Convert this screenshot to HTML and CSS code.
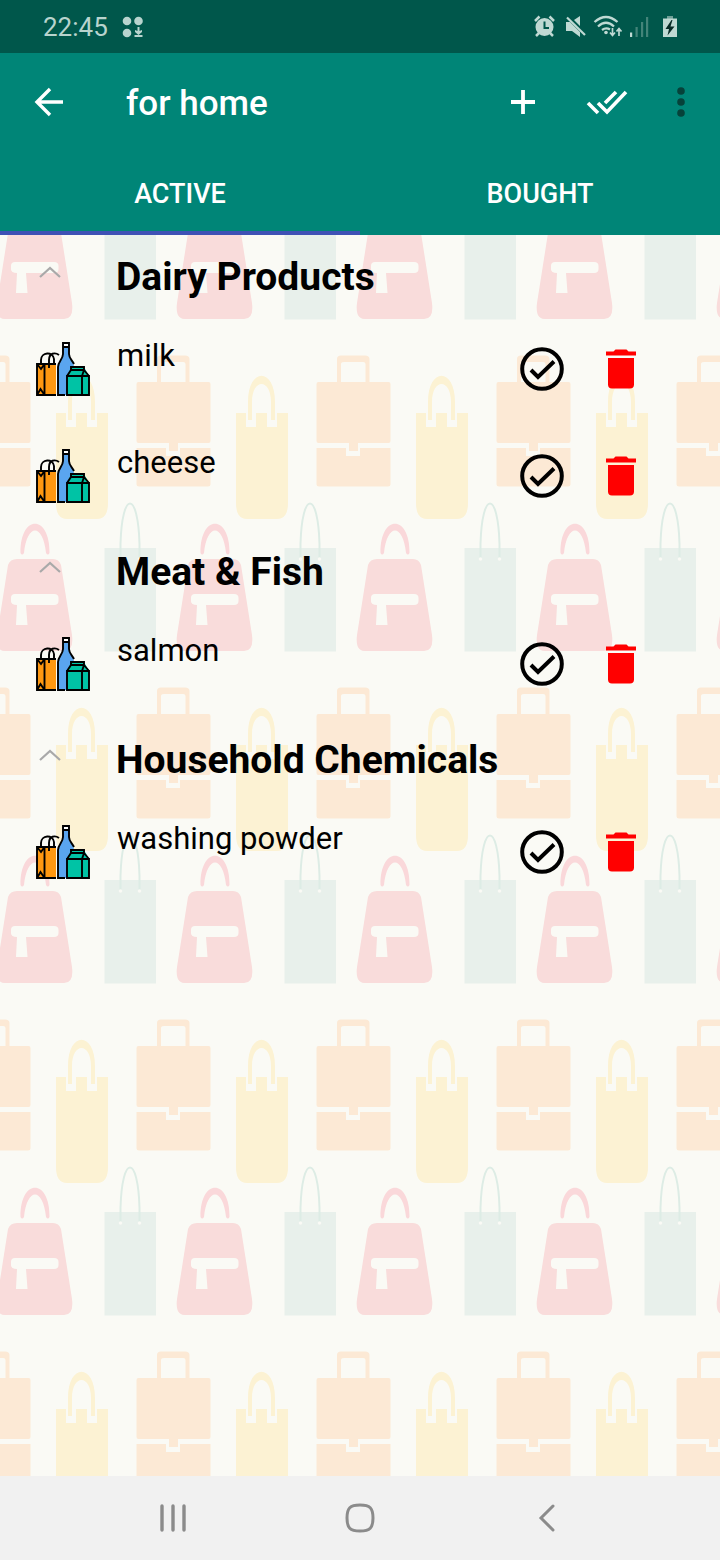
FILE: index.html
```
<!DOCTYPE html>
<html lang="en">
<head>
<meta charset="utf-8">
<meta name="viewport" content="width=device-width, initial-scale=1">
<title>for home</title>
<link rel="stylesheet" href="styles.css">
</head>
<body>
<svg class="defs" aria-hidden="true">
  <defs>
    <symbol id="goods" viewBox="0 0 54 54">
      <path d="M1 22H20V53H1Z" fill="#ff9811"/>
      <path d="M27 1h6v12c0 4 5 7 5 12v28H22V25c0-5 5-8 5-12Z" fill="#5aa5ef"/>
      <path d="M28 2h4v3h-4Z" fill="#fff"/>
      <path d="M31 34l4-9h13l5 9v19H31Z" fill="#00c3a5"/>
      <g fill="none" stroke="#000" stroke-width="1.900">
        <path d="M20 22H1V53H20M8.500 22V53M1 22l4 5 3.500-5M1 53l3.500-6 4 6M5 22V18C5 10 17 9 18 17V22M13 26V18C13 11 19 10 23 13"/>
        <path d="M29 53H22V25C22 20 27 17 27 12V1H33V12C33 16 36 18 38 22M27 5H33"/>
        <path d="M31 34H53V53H31ZM31 34L35 28V25H48V28L53 34M35 28H48M46 34V53M48 28L46 34"/>
      </g>
    </symbol>
    <symbol id="check" viewBox="0 0 44 44">
      <circle cx="22" cy="22" r="19.800" fill="none" stroke="#000" stroke-width="4"/>
      <path d="M11 23L18 30L34 14.500" fill="none" stroke="#000" stroke-width="4"/>
    </symbol>
    <symbol id="trash" viewBox="0 0 32 40">
      <path d="M1 2.500H8.500L10.500.5H21.500L23.500 2.500H31V6.500H1ZM3 9H29V35.500Q29 39.500 25 39.500H7Q3 39.500 3 35.500Z" fill="#f00"/>
    </symbol>
    <symbol id="chevron" viewBox="0 0 24 24">
      <path d="M2 17L12 8L22 17" fill="none" stroke="#a9a9a9" stroke-width="2.200"/>
    </symbol>
    <g id="bags">
      <g fill="#fce9d5">
        <rect x="136.500" y="46" width="74" height="61" rx="2"/>
        <path d="M136.500 112H166V120H180V112H210.500V148Q210.500 150.500 208 150.500H139Q136.500 150.500 136.500 148Z"/>
        <path d="M169 105H178V115H169Z"/>
        <path d="M157 47V23Q157 19.500 161 19.500H185Q189.500 19.500 189.500 23V47H185.500V28Q185.500 26 183 26H164Q161 26 161 28V47Z"/>
      </g>
      <path d="M56 77H66V91H76V77H87V91H97V77H108V167Q108 183 97 183H67Q56 183 56 167Z" fill="#fcf2d3"/>
      <path d="M68 84V66C68 31 95 31 95 66V84L91 84V66C91 42 72 42 72 66V84Z" fill="#fcf2d3"/>
      <path d="M17 223H53Q59 223 61 229L72 299Q74 315 64 315H5Q-5 315 -3 299L8 229Q10 223 17 223ZM15 258Q11 258 11 262V265Q11 269 17 269L16 289H27.500L26 269H54Q58.500 269 58.500 265V262Q58.500 258 54 258Z" fill="#f9dcdb" fill-rule="evenodd"/>
      <path d="M20.500 217C20 178 50 178 49.500 217Q48 220 46 217C43 187 27 187 24 217Q22 220 20.500 217Z" fill="#fad8da"/>
      <path d="M104.500 212H156V315.500H104.500Z" fill="#e8f0eb"/>
      <path d="M120.500 222V208C122 154 138 154 139.500 208V222" fill="none" stroke="#ddece5" stroke-width="2"/>
      <circle cx="120.500" cy="223" r="1.800" fill="#fafaf5"/>
      <circle cx="139.500" cy="223" r="1.800" fill="#fafaf5"/>
    </g>
    <pattern id="wallpaper" x="0" y="101" width="180" height="332" patternUnits="userSpaceOnUse">
      <use href="#bags"/>
      <use href="#bags" x="-180"/>
      <use href="#bags" x="180"/>
    </pattern>
  </defs>
</svg>

<div class="screen">
  <div class="status">
    <span class="clock">22:45</span>
    <svg width="22" height="22" viewBox="0 0 22 22" fill="#b8d4ce"><circle cx="5" cy="5" r="4.300"/><circle cx="16.500" cy="5" r="4.300"/><circle cx="5" cy="17" r="4.300"/><path d="M15.500 11h2v4l2.500-1v2l-3.500 3-3.500-3v-2l2.500 1ZM12.500 19h8v2h-8Z"/></svg>
    <svg class="status-icons" width="146" height="24" viewBox="533 15 146 24" fill="#bfd9d3">
      <circle cx="544.500" cy="27" r="9"/>
      <path d="M535 21l4.500-4.500M554 21l-4.500-4.500M539 33l-3 3M550 33l3 3" stroke="#bfd9d3" stroke-width="2.500"/>
      <path d="M544.500 21.500V28H549" fill="none" stroke="#00574b" stroke-width="2"/>
      <path d="M566 22H570L580 32V37L572 31H566ZM574 20L580 16V26Z"/>
      <path d="M567 17.500L585 35" stroke="#bfd9d3" stroke-width="2.200"/>
      <g fill="none" stroke="#bfd9d3" stroke-width="2.300"><path d="M594.500 22Q606 12 617.500 22M598 26.500Q606 19 614 26.500M602 30Q606 27 610 29.500"/></g>
      <circle cx="606" cy="32.500" r="1.800"/>
      <path d="M612.500 28V35M610 32.500L612.500 35.500L615 32.500M619 36V29M616.500 31.500L619 28.500L621.500 31.500" fill="none" stroke="#bfd9d3" stroke-width="1.700"/>
      <path d="M630 32.500h2.200V37h-2.200Z"/>
      <path d="M635.500 27h2.200V37h-2.200ZM641 22h2.200V37h-2.200ZM646 17h2.200V37h-2.200Z" fill="#438479"/>
      <path d="M667 16h6v3h-6Z" fill="#6f9f97"/><path d="M663 18.500h14V37h-14Z"/>
      <path d="M671.500 20L665.500 29H669L667.500 35.500L674.500 26.500H670.500L672.500 20Z" fill="#082b26"/>
    </svg>
  </div>

  <header class="appbar">
    <button class="icon-button back" aria-label="Back"><svg width="30" height="30" viewBox="0 0 30 30"><path d="M29 15H4M16 2L3 15L16 28" fill="none" stroke="#fff" stroke-width="3.400"/></svg></button>
    <h1 class="title">for home</h1>
    <button class="icon-button" aria-label="Add"><svg width="26" height="26" viewBox="0 0 26 26"><path d="M13 1V25M1 13H25" stroke="#fff" stroke-width="3.800"/></svg></button>
    <button class="icon-button all" aria-label="Mark all bought"><svg width="42" height="26" viewBox="0 0 42 26"><path d="M2 14L12 24M12 14L21 23L40 3M19 14L30 3" fill="none" stroke="#fff" stroke-width="3.600"/></svg></button>
    <button class="icon-button more" aria-label="More options"><svg width="8" height="30" viewBox="0 0 8 30" fill="#06423a"><circle cx="4" cy="4" r="3.800"/><circle cx="4" cy="15" r="3.800"/><circle cx="4" cy="26" r="3.800"/></svg></button>
  </header>

  <nav class="tabs">
    <button class="tab active">ACTIVE</button>
    <button class="tab">BOUGHT</button>
  </nav>

  <main class="content">
    <svg class="wallpaper" aria-hidden="true"><rect width="100%" height="100%" fill="#fafaf5"/><rect width="100%" height="100%" fill="url(#wallpaper)"/></svg>
    <section>
      <div class="group"><button class="toggle" aria-label="Collapse Dairy Products"><svg width="24" height="24"><use href="#chevron"/></svg></button><h2 class="group-name">Dairy Products</h2></div>
      <ul class="items">
        <li class="item"><svg class="goods"><use href="#goods"/></svg><span class="name">milk</span><button class="action" aria-label="Mark milk bought"><svg width="44" height="44"><use href="#check"/></svg></button><button class="action" aria-label="Delete milk"><svg width="32" height="40"><use href="#trash"/></svg></button></li>
        <li class="item"><svg class="goods"><use href="#goods"/></svg><span class="name">cheese</span><button class="action" aria-label="Mark cheese bought"><svg width="44" height="44"><use href="#check"/></svg></button><button class="action" aria-label="Delete cheese"><svg width="32" height="40"><use href="#trash"/></svg></button></li>
      </ul>
    </section>
    <section>
      <div class="group"><button class="toggle" aria-label="Collapse Meat &amp; Fish"><svg width="24" height="24"><use href="#chevron"/></svg></button><h2 class="group-name">Meat &amp; Fish</h2></div>
      <ul class="items">
        <li class="item"><svg class="goods"><use href="#goods"/></svg><span class="name">salmon</span><button class="action" aria-label="Mark salmon bought"><svg width="44" height="44"><use href="#check"/></svg></button><button class="action" aria-label="Delete salmon"><svg width="32" height="40"><use href="#trash"/></svg></button></li>
      </ul>
    </section>
    <section>
      <div class="group"><button class="toggle" aria-label="Collapse Household Chemicals"><svg width="24" height="24"><use href="#chevron"/></svg></button><h2 class="group-name">Household Chemicals</h2></div>
      <ul class="items">
        <li class="item"><svg class="goods"><use href="#goods"/></svg><span class="name">washing powder</span><button class="action" aria-label="Mark washing powder bought"><svg width="44" height="44"><use href="#check"/></svg></button><button class="action" aria-label="Delete washing powder"><svg width="32" height="40"><use href="#trash"/></svg></button></li>
      </ul>
    </section>
  </main>

  <footer class="navbar">
    <button class="nav-button" aria-label="Recent apps"><svg width="30" height="30" viewBox="0 0 30 30"><path d="M4 3V27M15 3V27M26 3V27" stroke="#8b8b8b" stroke-width="3.400" stroke-linecap="round"/></svg></button>
    <button class="nav-button" aria-label="Home"><svg width="30" height="30" viewBox="0 0 30 30"><path d="M15 2C25 2 28 5 28 15S25 28 15 28S2 25 2 15S5 2 15 2Z" fill="none" stroke="#8b8b8b" stroke-width="3"/></svg></button>
    <button class="nav-button" aria-label="Back"><svg width="30" height="30" viewBox="0 0 30 30"><path d="M21 3L9 15L21 27" fill="none" stroke="#8b8b8b" stroke-width="3" stroke-linecap="round"/></svg></button>
  </footer>
</div>
</body>
</html>
```
FILE: styles.css
```
* {
  box-sizing: border-box;
}

body {
  margin: 0;
  font-family: Roboto, "Liberation Sans", sans-serif;
  color: #000;
}

button {
  padding: 0;
  border: 0;
  background: none;
  font: inherit;
  color: inherit;
}

svg {
  display: block;
  flex: none;
}

.defs {
  position: absolute;
  width: 0;
  height: 0;
}

.screen {
  display: flex;
  flex-direction: column;
  min-height: 100vh;
}

.status {
  display: flex;
  align-items: center;
  gap: 14px;
  height: 53px;
  padding: 0 41px 0 43px;
  background: #00574b;
  color: #b8d4ce;
}

.clock {
  font-size: 26px;
  line-height: 32px;
}

.status-icons {
  margin-left: auto;
}

.appbar {
  display: flex;
  align-items: center;
  height: 99px;
  padding: 0 21px 2px;
  background: #008577;
  color: #fff;
}

.icon-button {
  display: flex;
  align-items: center;
  justify-content: center;
  width: 56px;
  height: 56px;
}

.all {
  width: 112px;
}

.more {
  width: 36px;
}

.title {
  flex: 1;
  margin: 0;
  padding: 4px 0 0 49px;
  font-size: 35px;
  font-weight: 500;
  line-height: 40px;
}

.tabs {
  display: flex;
  height: 83px;
  background: #008577;
  color: #fff;
}

.tab {
  flex: 1;
  border-top: 4px solid transparent;
  border-bottom: 4px solid transparent;
  font-size: 27px;
  font-weight: 500;
}

.tab.active {
  border-bottom-color: #3f51b5;
}

.content {
  position: relative;
  flex: 1;
}

.wallpaper {
  position: absolute;
  inset: 0;
  z-index: -1;
  width: 100%;
  height: 100%;
}

.group {
  display: flex;
  align-items: center;
  height: 81px;
  padding: 2px 0 0 38px;
}

.toggle {
  width: 24px;
  height: 34px;
  padding-bottom: 10px;
}

.group-name {
  margin: 0;
  padding-left: 54px;
  font-size: 39px;
  font-weight: 700;
  line-height: 48px;
}

.items {
  margin: 0;
  padding: 0;
  list-style: none;
}

.item {
  display: flex;
  align-items: center;
  height: 107px;
  padding: 0 83px 2px 36px;
}

.goods {
  width: 54px;
  height: 54px;
}

.name {
  flex: 1;
  padding: 0 0 26px 27px;
  font-size: 31px;
  line-height: 40px;
}

.action + .action {
  margin-left: 41px;
}

.navbar {
  display: flex;
  align-items: center;
  justify-content: center;
  gap: 157px;
  height: 84px;
  background: #f1f1f1;
}
```
